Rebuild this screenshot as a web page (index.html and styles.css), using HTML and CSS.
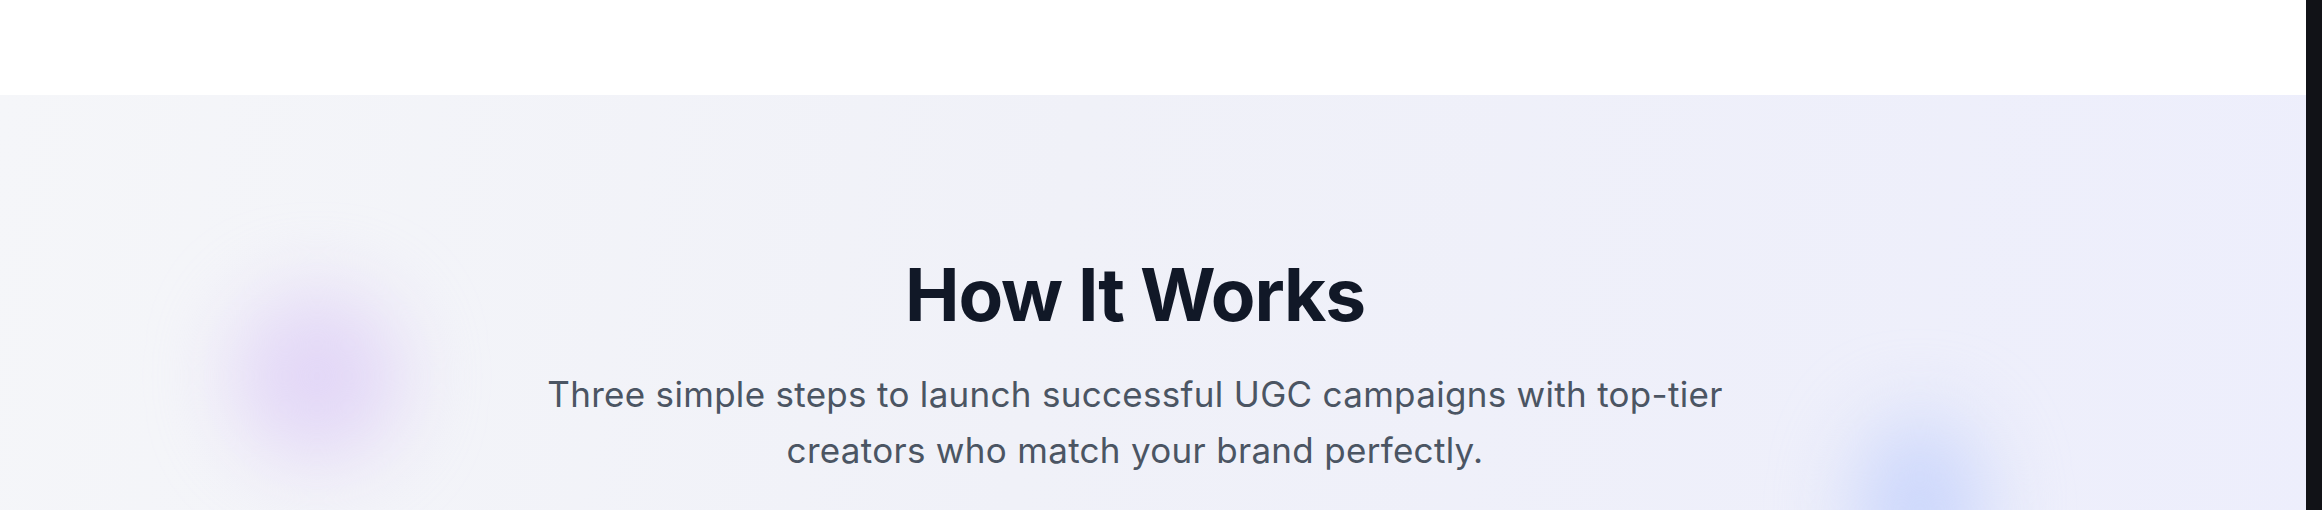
FILE: index.html
```html
<!DOCTYPE html>
<html lang="en">
<head>
<meta charset="utf-8">
<title>How It Works</title>
<link rel="stylesheet" href="styles.css">
</head>
<body>
  <div class="page">
    <main class="main">
      <div class="topbar"></div>
      <section class="how">
        <div class="blob blob-purple"></div>
        <div class="blob blob-blue"></div>
        <div class="how-inner">
          <h2 class="how-title">How It Works</h2>
          <p class="how-sub">Three simple steps to launch successful UGC campaigns with top-tier creators who match your brand perfectly.</p>
        </div>
      </section>
    </main>
    <div class="scrollbar"></div>
  </div>
</body>
</html>
```

FILE: styles.css
```css
body {
  margin: 0;
  font-family: Inter, "Liberation Sans", sans-serif;
  background: #ffffff;
  overflow: hidden;
}
.page {
  display: flex;
  min-height: 510px;
}
.main {
  flex: 1;
  min-width: 0;
}
.scrollbar {
  width: 16px;
  flex: none;
  background: #111217;
}
.topbar {
  height: 95px;
  background: #ffffff;
}
.how {
  position: relative;
  overflow: hidden;
  background: linear-gradient(100deg, #f5f6f9 0%, #f0f1f8 45%, #edeefc 100%);
  padding: 160px 36px 200px 0;
}
.blob {
  position: absolute;
  border-radius: 50%;
  filter: blur(40px);
}
.blob-purple {
  left: 232px;
  top: 196px;
  width: 170px;
  height: 170px;
  background: rgba(222, 208, 246, 0.8);
}
.blob-blue {
  left: 1855px;
  top: 322px;
  width: 130px;
  height: 190px;
  background: rgba(200, 212, 252, 0.9);
}
.how-inner {
  position: relative;
  display: flex;
  flex-direction: column;
  align-items: center;
  text-align: center;
}
.how-title {
  margin: 0;
  font-size: 73px;
  line-height: 1.1;
  font-weight: 700;
  color: #111827;
  letter-spacing: -1.2px;
}
.how-sub {
  margin: 31px 0 0;
  max-width: 1240px;
  font-size: 35px;
  line-height: 56px;
  font-weight: 400;
  color: #4b5563;
  letter-spacing: 0.3px;
}
```
